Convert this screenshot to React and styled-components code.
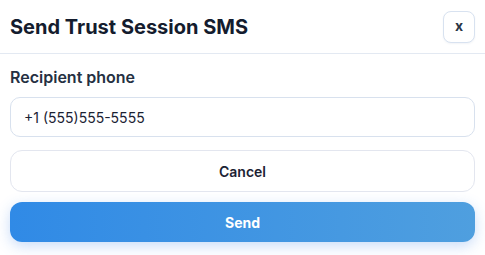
import React from "react";
import styled, { createGlobalStyle } from "styled-components";

const GlobalStyle = createGlobalStyle`
  html, body {
    margin: 0;
    padding: 0;
    background: #ffffff;
    font-family: Inter, "Noto Sans", sans-serif;
  }
  * { box-sizing: border-box; }
`;

const Modal = styled.div`
  width: 485px;
  height: 255px;
  background: #fff;
  display: flex;
  flex-direction: column;
`;

const Header = styled.div`
  height: 54px;
  display: flex;
  align-items: center;
  justify-content: space-between;
  padding: 0 10px;
  border-bottom: 1px solid #e3e9f2;
`;

const Title = styled.h2`
  margin: 0;
  font-size: 20px;
  font-weight: 700;
  color: #141c2e;
`;

const CloseButton = styled.button`
  width: 32px;
  height: 32px;
  border-radius: 8px;
  border: 1px solid #d8e2f0;
  background: #fff;
  font-family: inherit;
  font-size: 14px;
  font-weight: 700;
  color: #2a3445;
  display: flex;
  align-items: center;
  justify-content: center;
  padding: 0 0 2px;
  box-shadow: 0 1px 2px rgba(30, 60, 120, 0.06);
`;

const Body = styled.div`
  padding: 13px 10px 0;
  display: flex;
  flex-direction: column;
`;

const Label = styled.label`
  font-size: 16px;
  font-weight: 600;
  color: #253042;
  line-height: 21px;
  margin-bottom: 9px;
`;

const Input = styled.input`
  height: 40px;
  border-radius: 10px;
  border: 1px solid #d8e1ee;
  padding: 0 13px;
  font-family: inherit;
  font-size: 14px;
  color: #1b2233;
  outline: none;
  margin-bottom: 13px;
`;

const Button = styled.button`
  height: ${(p) => (p.$primary ? "40px" : "42px")};
  border-radius: 12px;
  font-family: inherit;
  font-size: 14px;
  font-weight: ${(p) => (p.$primary ? 700 : 600)};
  border: ${(p) => (p.$primary ? "none" : "1px solid #e3e6ef")};
  color: ${(p) => (p.$primary ? "#fff" : "#1b2233")};
  background: ${(p) =>
    p.$primary ? "linear-gradient(90deg, #308ae6 0%, #4f9fdf 100%)" : "#fff"};
  box-shadow: ${(p) =>
    p.$primary ? "0 4px 14px rgba(60, 130, 230, 0.28)" : "none"};
  margin-bottom: ${(p) => (p.$primary ? "0" : "10px")};
`;

export default function App() {
  return (
    <>
      <GlobalStyle />
      <Modal>
        <Header>
          <Title>Send Trust Session SMS</Title>
          <CloseButton>x</CloseButton>
        </Header>
        <Body>
          <Label>Recipient phone</Label>
          <Input defaultValue="+1 (555)555-5555" />
          <Button>Cancel</Button>
          <Button $primary>Send</Button>
        </Body>
      </Modal>
    </>
  );
}
